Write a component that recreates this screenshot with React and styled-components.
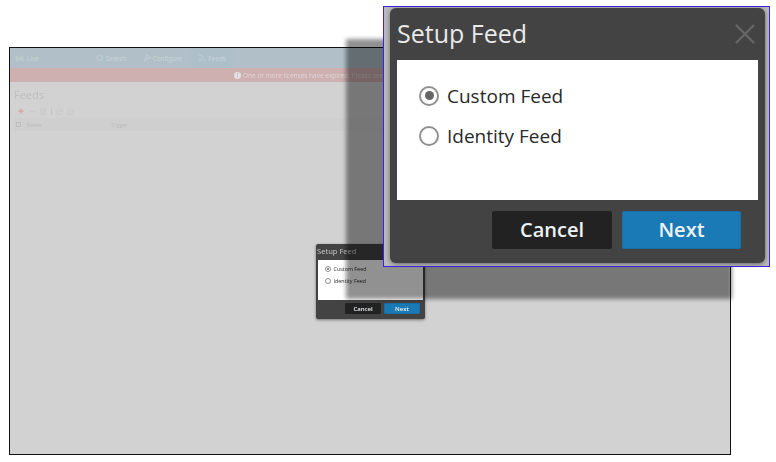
import React from 'react'
import styled, { createGlobalStyle } from 'styled-components'
import { Search, Rss, Hammer, Radio as LiveIcon, Plus, Minus, SquarePen, CircleDot } from 'lucide-react'

const GlobalStyle = createGlobalStyle`
  html, body {
    margin: 0;
    padding: 0;
    background: #fff;
  }
  body {
    font-family: "Open Sans", "Liberation Sans", sans-serif;
  }
`

function Dialog({ small }) {
  return (
    <DialogPanel $small={small}>
      <DialogHeader $small={small}>
        <DialogTitle $small={small}>Setup Feed</DialogTitle>
        {!small && (
          <CloseIcon viewBox="0 0 22 22">
            <path d="M2 2 L20 20 M20 2 L2 20" stroke="#666" strokeWidth="2.4" fill="none" />
          </CloseIcon>
        )}
      </DialogHeader>
      <DialogBody $small={small}>
        <RadioRow $small={small}>
          <RadioDot $small={small} $checked />
          Custom Feed
        </RadioRow>
        <RadioRow $small={small}>
          <RadioDot $small={small} />
          Identity Feed
        </RadioRow>
      </DialogBody>
      <DialogFooter $small={small}>
        <FooterButton $small={small}>Cancel</FooterButton>
        <FooterButton $small={small} $primary>Next</FooterButton>
      </DialogFooter>
    </DialogPanel>
  )
}

export default function App() {
  return (
    <Page>
      <GlobalStyle />
      <Frame>
        <BlurredApp>
          <NavBar>
            <NavBrand><LiveIcon size={9} /> Live</NavBrand>
            <NavItem><Search size={8} /> Search</NavItem>
            <NavItem><Hammer size={8} /> Configure</NavItem>
            <NavItem $active><Rss size={8} /> Feeds</NavItem>
          </NavBar>
          <AlertBar>
            <AlertDot>!</AlertDot>
            One or more licenses have expired. Please see Licensing
          </AlertBar>
          <Content>
            <Heading>Feeds</Heading>
            <Tools>
              <Plus size={8} color="#d09a9a" strokeWidth={3} />
              <Minus size={7} />
              <SquarePen size={7} />
              <ToolDivider />
              <CircleDot size={7} />
              <CircleDot size={7} />
            </Tools>
            <TableHead>
              <HeadCheck />
              <NameCell>Name</NameCell>
              <span>Trigger</span>
            </TableHead>
          </Content>
        </BlurredApp>
        <SmallDialogSpot>
          <Dialog small />
        </SmallDialogSpot>
      </Frame>
      <DropShade />
      <Callout>
        <Dialog />
      </Callout>
    </Page>
  )
}

const Page = styled.div`
  position: relative;
  width: 776px;
  height: 462px;
  padding: 47px 0 0 9px;
  box-sizing: border-box;
  overflow: hidden;
`

const Frame = styled.div`
  position: relative;
  width: 722px;
  height: 408px;
  box-sizing: border-box;
  border: 1px solid #111;
  background: #d2d2d2;
`

const BlurredApp = styled.div`
  filter: blur(0.7px);
  color: #bdbdbd;
`

const NavBar = styled.div`
  display: flex;
  align-items: center;
  height: 20px;
  background: #b1c0c8;
  color: #c9d2d6;
  font-size: 6.5px;
`

const NavBrand = styled.div`
  display: flex;
  align-items: center;
  gap: 3px;
  width: 73px;
  padding-left: 5px;
`

const NavItem = styled.div`
  display: flex;
  align-items: center;
  gap: 2px;
  height: 100%;
  padding: 0 8px;
  background: ${(p) => (p.$active ? '#adc0ca' : 'transparent')};
`

const AlertBar = styled.div`
  display: flex;
  align-items: center;
  justify-content: flex-start;
  gap: 2px;
  height: 14px;
  padding-left: 224px;
  background: #cfb0b1;
  color: #dfd6d6;
  font-size: 6.5px;
  white-space: nowrap;
`

const AlertDot = styled.span`
  display: inline-flex;
  align-items: center;
  justify-content: center;
  width: 7px;
  height: 7px;
  border-radius: 50%;
  background: #e2e2e2;
  color: #cfb0b1;
  font-size: 5px;
  font-weight: 700;
`

const Content = styled.div`
  padding: 5px 3px 0 4px;
`

const Heading = styled.div`
  font-size: 11px;
  line-height: 15px;
  color: #bebebe;
`

const Tools = styled.div`
  display: flex;
  align-items: center;
  gap: 4px;
  height: 14px;
  margin-top: 2px;
  padding-left: 3px;
  color: #c4c4c4;
`

const ToolDivider = styled.span`
  width: 1px;
  height: 7px;
  background: #c4c4c4;
`

const TableHead = styled.div`
  display: flex;
  align-items: center;
  height: 13px;
  padding-left: 2px;
  font-size: 5px;
  color: #b8b8b8;
  background: #cfcfcf;
`

const HeadCheck = styled.span`
  flex: none;
  box-sizing: border-box;
  width: 5px;
  height: 5px;
  margin-right: 6px;
  border: 1px solid #bfbfbf;
`

const NameCell = styled.span`
  width: 84px;
`

const SmallDialogSpot = styled.div`
  position: absolute;
  left: 306px;
  top: 196px;
  filter: blur(0.6px);
`

const DropShade = styled.div`
  position: absolute;
  left: 346px;
  top: 39px;
  width: 386px;
  height: 260px;
  background: rgba(0, 0, 0, 0.43);
  filter: blur(2px);
`

const Callout = styled.div`
  position: absolute;
  left: 383px;
  top: 6px;
  width: 387px;
  height: 261px;
  box-sizing: border-box;
  border: 1px solid #3a22e6;
  padding: 1px 4px 3px 6px;
  background: #b9b9b9;
`

const DialogPanel = styled.div`
  display: flex;
  flex-direction: column;
  box-sizing: border-box;
  width: ${(p) => (p.$small ? '109px' : '100%')};
  height: ${(p) => (p.$small ? '75px' : '100%')};
  padding: ${(p) => (p.$small ? '0 2px' : '0 7px')};
  background: #434343;
  border-radius: ${(p) => (p.$small ? '2px' : '6px')};
  box-shadow: 0 1px ${(p) => (p.$small ? '3px' : '4px')} rgba(0, 0, 0, 0.45);
`

const DialogHeader = styled.div`
  display: flex;
  align-items: center;
  justify-content: space-between;
  flex: none;
  height: ${(p) => (p.$small ? '16px' : '52px')};
  padding-right: ${(p) => (p.$small ? '0' : '2px')};
`

const DialogTitle = styled.div`
  color: ${(p) => (p.$small ? '#cfcfcf' : '#e9e9e9')};
  font-size: ${(p) => (p.$small ? '7.6px' : '25px')};
  line-height: 1;
  margin-top: ${(p) => (p.$small ? '0' : '-1px')};
  margin-left: ${(p) => (p.$small ? '-1px' : '0')};
`

const CloseIcon = styled.svg`
  width: 22px;
  height: 22px;
`

const DialogBody = styled.div`
  display: flex;
  flex-direction: column;
  flex: none;
  box-sizing: border-box;
  height: ${(p) => (p.$small ? '40px' : '140px')};
  padding: ${(p) => (p.$small ? '4px 0 0 7px' : '22px 0 0 22px')};
  gap: ${(p) => (p.$small ? '2px' : '13px')};
  background: #fff;
`

const RadioRow = styled.div`
  display: flex;
  align-items: center;
  gap: ${(p) => (p.$small ? '2.5px' : '8px')};
  height: ${(p) => (p.$small ? '10px' : '27px')};
  color: #2a2a2a;
  font-size: ${(p) => (p.$small ? '5.4px' : '19px')};
  white-space: nowrap;
`

const RadioDot = styled.span`
  position: relative;
  flex: none;
  box-sizing: border-box;
  width: ${(p) => (p.$small ? '6px' : '20px')};
  height: ${(p) => (p.$small ? '6px' : '20px')};
  border: ${(p) => (p.$small ? '0.7px' : '2px')} solid #909090;
  border-radius: 50%;
  background: #fff;

  &::after {
    content: '';
    display: ${(p) => (p.$checked ? 'block' : 'none')};
    position: absolute;
    inset: ${(p) => (p.$small ? '1px' : '3.5px')};
    border-radius: 50%;
    background: #666;
  }
`

const DialogFooter = styled.div`
  display: flex;
  justify-content: flex-end;
  gap: ${(p) => (p.$small ? '3px' : '10px')};
  padding: ${(p) => (p.$small ? '3px 3px 0 0' : '11px 17px 0 0')};
`

const FooterButton = styled.div`
  display: flex;
  align-items: center;
  justify-content: center;
  box-sizing: border-box;
  width: ${(p) => (p.$small ? '36px' : p.$primary ? '119px' : '120px')};
  height: ${(p) => (p.$small ? '11px' : '38px')};
  padding-bottom: ${(p) => (p.$small ? '0' : '2px')};
  background: ${(p) => (p.$primary ? '#1a7ab5' : '#222')};
  border: 1px solid ${(p) => (p.$primary ? '#1a6ea3' : '#222')};
  border-radius: ${(p) => (p.$small ? '1px' : '2px')};
  color: #eef2f5;
  font-size: ${(p) => (p.$small ? '6px' : '20px')};
  font-weight: 600;
`
